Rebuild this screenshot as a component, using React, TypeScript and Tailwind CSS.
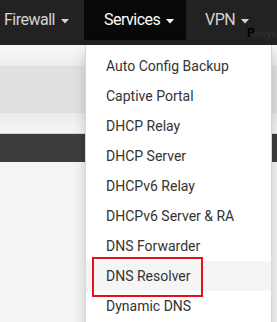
import React from "react";

const Caret = () => (
  <svg width="8" height="5" viewBox="0 0 8 5" className="ml-[6px] mt-[2px]">
    <path d="M0 0 L8 0 L4 4.5 Z" fill="currentColor" />
  </svg>
);

const items = [
  "Auto Config Backup",
  "Captive Portal",
  "DHCP Relay",
  "DHCP Server",
  "DHCPv6 Relay",
  "DHCPv6 Server & RA",
  "DNS Forwarder",
  "DNS Resolver",
  "Dynamic DNS",
];

export default function App() {
  return (
    <div
      className="relative w-[277px] h-[322px] overflow-hidden bg-[#f4f4f4]"
      style={{ fontFamily: "Roboto, 'Noto Sans', sans-serif" }}
    >
      {/* navbar */}
      <div className="relative h-[45px] bg-[#222222] flex items-start">
        <div className="w-[84px] h-[40px] pl-[4px] flex items-center text-[#d4d4d4] text-[16px] tracking-[-0.5px]">
          Firewall
          <Caret />
        </div>
        <div className="w-[102px] h-[40px] pl-[20px] flex items-center bg-[#080808] text-white text-[16px] tracking-[-0.5px]">
          Services
          <Caret />
        </div>
        <div className="h-[40px] pl-[19px] flex items-center text-[#d4d4d4] text-[16px] tracking-[-0.5px]">
          VPN
          <Caret />
        </div>
        <div className="absolute left-[247px] top-[27px] flex items-end leading-none">
          <span className="text-[12px] font-bold text-black">P</span>
          <span className="text-[9px] text-[#333]">rovya</span>
        </div>
      </div>

      {/* page behind */}
      <div className="h-[21px] bg-gradient-to-b from-[#f8f8f8] to-[#ececec]" />
      <div className="h-[47px] bg-[#e0e0e0]" />
      <div className="h-[21px] bg-gradient-to-b from-[#ebebeb] to-[#f6f6f6] border-b border-[#d6d6d6]" />
      <div className="h-[28px] bg-[#3d3d3d]" />

      {/* dropdown */}
      <div className="absolute left-[85px] top-[45px] w-[187px] h-[290px] bg-white border-x border-[#d8d8d8] shadow-[0_6px_12px_rgba(0,0,0,0.175)] pt-[6px]">
        {items.map((t) => (
          <div
            key={t}
            className={
              "h-[30px] pl-[20px] flex items-center text-[14px] text-[#333333] " +
              (t === "DNS Resolver" ? "bg-[#f5f5f5]" : "")
            }
          >
            {t}
          </div>
        ))}
        <div className="absolute left-[6px] top-[212px] w-[111px] h-[40px] border-2 border-[#e8101a]" />
      </div>
    </div>
  );
}
